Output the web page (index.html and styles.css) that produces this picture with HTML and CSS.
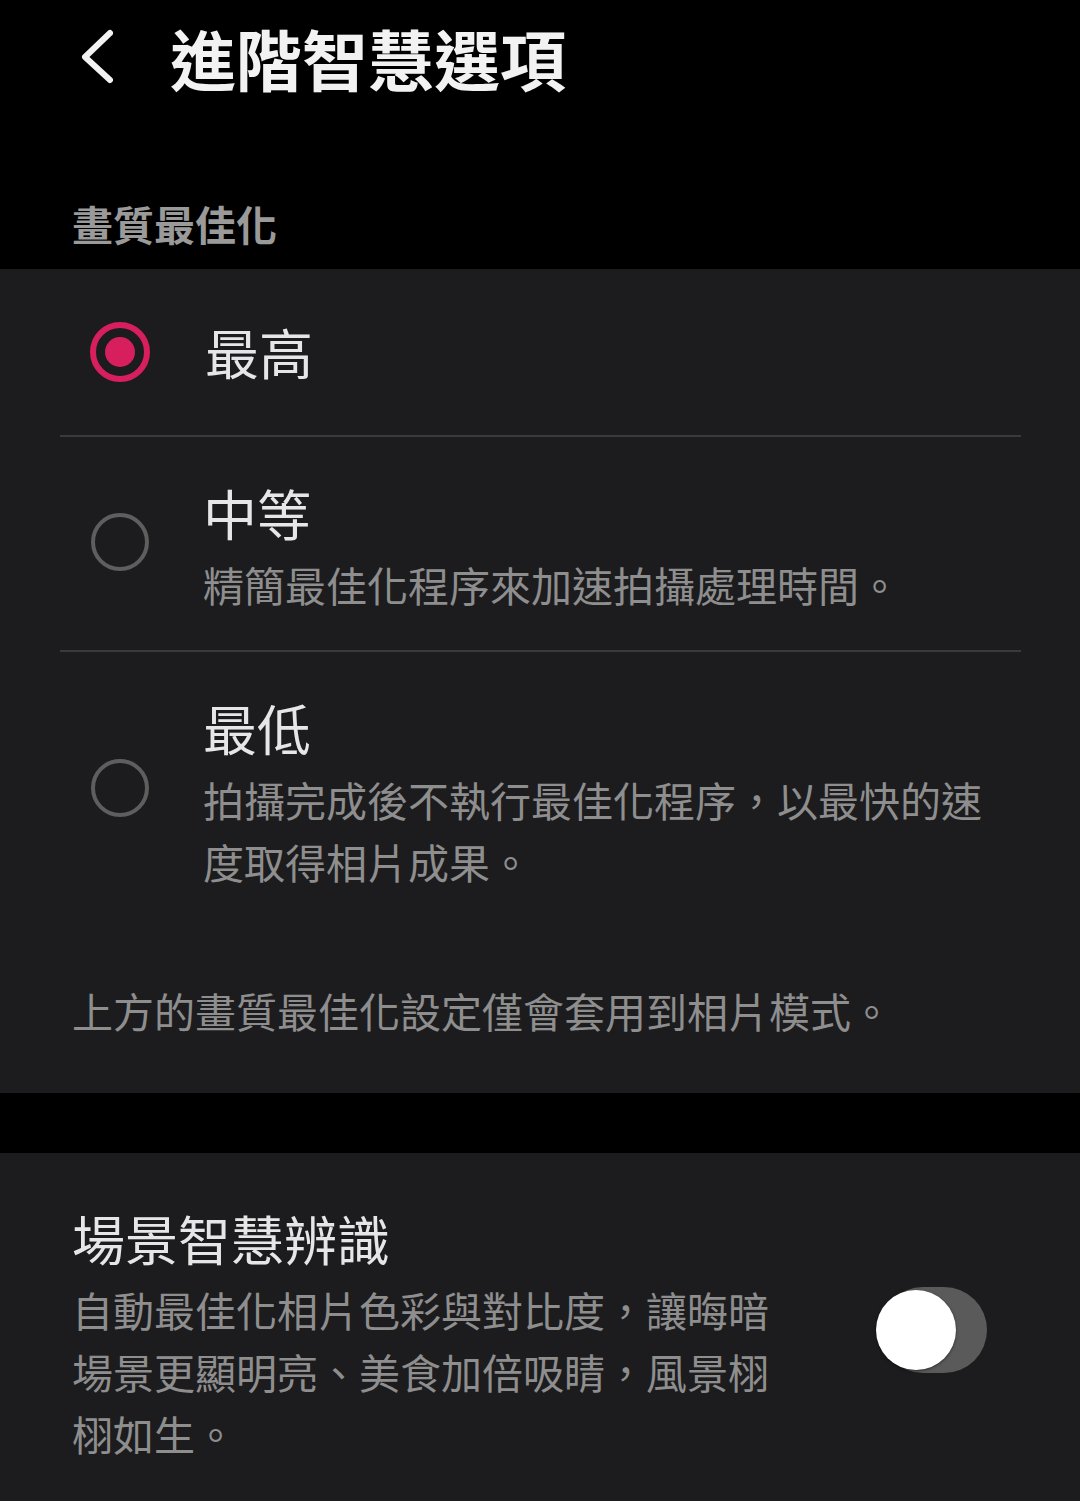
FILE: index.html
```html
<!DOCTYPE html>
<html lang="zh-Hant">

<head>
  <meta charset="UTF-8">
  <title>進階智慧選項</title>
  <link rel="stylesheet" href="styles.css">
</head>

<body>

  <header class="topbar">
    <svg class="back" width="40" height="60" viewBox="0 0 40 60">
      <polyline points="37,5 12,29 37,52" fill="none" stroke="#f2f2f2" stroke-width="6" stroke-linecap="round" stroke-linejoin="round" />
    </svg>
    <h1>進階智慧選項</h1>
  </header>

  <div class="section-label">畫質最佳化</div>

  <section class="card">
    <div class="options">
      <div class="option option-single">
        <span class="radio checked"></span>
        <div class="option-text">
          <div class="option-title">最高</div>
        </div>
      </div>
      <div class="option">
        <span class="radio"></span>
        <div class="option-text">
          <div class="option-title">中等</div>
          <div class="option-sub">精簡最佳化程序來加速拍攝處理時間。</div>
        </div>
      </div>
      <div class="option option-last">
        <span class="radio"></span>
        <div class="option-text">
          <div class="option-title">最低</div>
          <div class="option-sub">拍攝完成後不執行最佳化程序，以最快的速度取得相片成果。</div>
        </div>
      </div>
    </div>
    <p class="note">上方的畫質最佳化設定僅會套用到相片模式。</p>
  </section>

  <section class="card card-switch">
    <div class="switch-text">
      <div class="option-title">場景智慧辨識</div>
      <div class="option-sub">自動最佳化相片色彩與對比度，讓晦暗場景更顯明亮、美食加倍吸睛，風景栩栩如生。</div>
    </div>
    <div class="toggle">
      <span class="toggle-thumb"></span>
    </div>
  </section>

</body>
</html>
```

FILE: styles.css
```css
body { margin: 0; background: #000; font-family: "Noto Sans CJK TC", "Noto Sans", sans-serif; color: #e6e6e6; }

.topbar { height: 120px; display: flex; align-items: center; padding-left: 73px; }
.back { flex: none; margin-top: -4px; }
.topbar h1 { margin: -7px 0 0 57px; font-size: 66px; line-height: 80px; font-weight: 700; color: #f2f2f2; }

.section-label { padding: 78px 0 21px 72px; font-size: 41px; line-height: 50px; font-weight: 700; color: #9a9a9a; }

.card { background: #1c1c1e; }
.options { padding: 0 59px 0 60px; }
.option { display: flex; align-items: center; padding: 42px 0 35px; border-bottom: 2px solid #3a3a3c; }
.option-single { padding: 49px 0; }
.option-last { padding-bottom: 40px; border-bottom: none; }

.radio { flex: none; box-sizing: border-box; width: 58px; height: 58px; margin: 0 54px 10px 31px; border: 4px solid #5e5e5e; border-radius: 50%; position: relative; }
.radio.checked { width: 60px; height: 60px; margin: 0 55px 0 30px; border: 6px solid #d81f5e; }
.radio.checked::after { content: ""; position: absolute; left: 9px; top: 9px; width: 30px; height: 30px; border-radius: 50%; background: #d81f5e; }

.option-text { width: 800px; }
.option-title { font-size: 54px; line-height: 68px; color: #e6e6e6; }
.option-sub { margin-top: 6px; font-size: 41px; line-height: 62px; color: #8e8e8e; }

.note { margin: 0; padding: 47px 60px 52px 72px; font-size: 41px; line-height: 62px; color: #8e8e8e; }

.card-switch { margin-top: 60px; display: flex; align-items: center; padding: 51px 93px 40px 72px; }
.card-switch .option-title { font-size: 53px; }
.switch-text { width: 720px; }
.toggle { margin: 0 0 8px auto; position: relative; width: 107px; height: 86px; border-radius: 43px; background: #5a5a5a; }
.toggle-thumb { position: absolute; left: -4px; top: 3px; width: 80px; height: 80px; border-radius: 50%; background: #fff; box-shadow: 0 1px 3px rgba(0,0,0,0.5); }
```
